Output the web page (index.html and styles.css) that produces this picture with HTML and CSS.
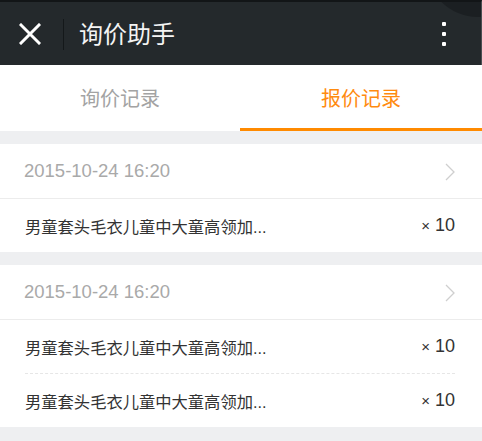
FILE: index.html
```html
<!DOCTYPE html>
<html lang="zh-CN">
<head>
<meta charset="utf-8">
<title>询价助手</title>
<link rel="stylesheet" href="styles.css">
</head>
<body>
<header class="appbar">
  <div class="corner"></div>
  <svg class="close" width="22" height="22" viewBox="0 0 22 22"><path d="M2 2 L20 20 M20 2 L2 20" stroke="#fff" stroke-width="3" stroke-linecap="square" fill="none"/></svg>
  <span class="sep"></span>
  <h1 class="title">询价助手</h1>
  <div class="more"><i></i><i></i><i></i></div>
</header>
<nav class="tabs">
  <div class="tab first">询价记录</div>
  <div class="tab active">报价记录</div>
</nav>
<main class="list">
  <section class="card">
    <div class="date-row">
      <span class="date">2015-10-24 16:20</span>
      <svg class="chev" width="10" height="18" viewBox="0 0 10 18"><path d="M1 1 L9 9 L1 17" stroke="#cfcfcf" stroke-width="1.3" fill="none"/></svg>
    </div>
    <div class="item"><span class="name">男童套头毛衣儿童中大童高领加...</span><span class="qty"><span class="x">×</span> 10</span></div>
  </section>
  <section class="card">
    <div class="date-row">
      <span class="date">2015-10-24 16:20</span>
      <svg class="chev" width="10" height="18" viewBox="0 0 10 18"><path d="M1 1 L9 9 L1 17" stroke="#cfcfcf" stroke-width="1.3" fill="none"/></svg>
    </div>
    <div class="item"><span class="name">男童套头毛衣儿童中大童高领加...</span><span class="qty"><span class="x">×</span> 10</span></div>
    <div class="item"><span class="name">男童套头毛衣儿童中大童高领加...</span><span class="qty"><span class="x">×</span> 10</span></div>
  </section>
</main>
</body>
</html>
```
FILE: styles.css
```css
* { box-sizing: border-box; margin: 0; padding: 0; }
html, body { width: 482px; height: 441px; overflow: hidden; }
body {
  background: #eeeff1;
  font-family: "Liberation Sans", "Noto Sans CJK SC", sans-serif;
}
.appbar {
  position: relative;
  height: 65px;
  background: #24292c;
  border-top: 2px solid #121517;
  border-right: 1px solid #4a4f52;
  display: flex;
  align-items: center;
  overflow: hidden;
}
.corner {
  position: absolute;
  left: 426px;
  top: -89px;
  width: 104px;
  height: 104px;
  border-radius: 50%;
  background: #1b1f22;
}
.close { margin-left: 19px; flex: none; }
.sep {
  width: 1px;
  height: 31px;
  background: #14181a;
  margin-left: 22px;
  margin-top: 1px;
  flex: none;
}
.title {
  margin-left: 15px;
  font-family: "Noto Sans CJK SC", sans-serif;
  font-size: 24px;
  font-weight: 400;
  color: #f4f4f4;
  line-height: 1;
  margin-top: -2px;
}
.more {
  margin-left: auto;
  margin-right: 35px;
  display: flex;
  flex-direction: column;
  gap: 6px;
  margin-top: 1px;
}
.more i { display: block; width: 4px; height: 4px; background: #fff; border-radius: 1px; }
.tabs {
  height: 66px;
  background: #fff;
  display: flex;
}
.tab {
  flex: 1;
  display: flex;
  align-items: center;
  justify-content: center;
  font-family: "Noto Sans CJK SC", sans-serif;
  font-size: 20px;
  color: #a3a3a3;
  padding-top: 1px;
  border-bottom: 3px solid transparent;
}
.tab.first { flex: 0 0 240px; }
.tab.active { color: #ff8b10; border-bottom-color: #ff8a00; }
.list {
  padding-top: 13px;
  display: flex;
  flex-direction: column;
  gap: 13px;
}
.card { background: #fff; }
.date-row {
  height: 55px;
  border-bottom: 1px solid #ececec;
  display: flex;
  align-items: center;
  justify-content: space-between;
  padding: 0 27px 0 24px;
}
.date { font-size: 18.5px; color: #a9a9a9; padding-bottom: 1px; }
.chev { flex: none; margin-top: 1px; }
.item {
  height: 53px;
  margin: 0 27px 0 25px;
  display: flex;
  align-items: center;
  justify-content: space-between;
  color: #333;
}
.item + .item { border-top: 1px dashed #e6e6e6; height: 54px; }
.name { font-size: 16.3px; }
.qty { font-size: 18px; }
.x { font-size: 15px; }
```
